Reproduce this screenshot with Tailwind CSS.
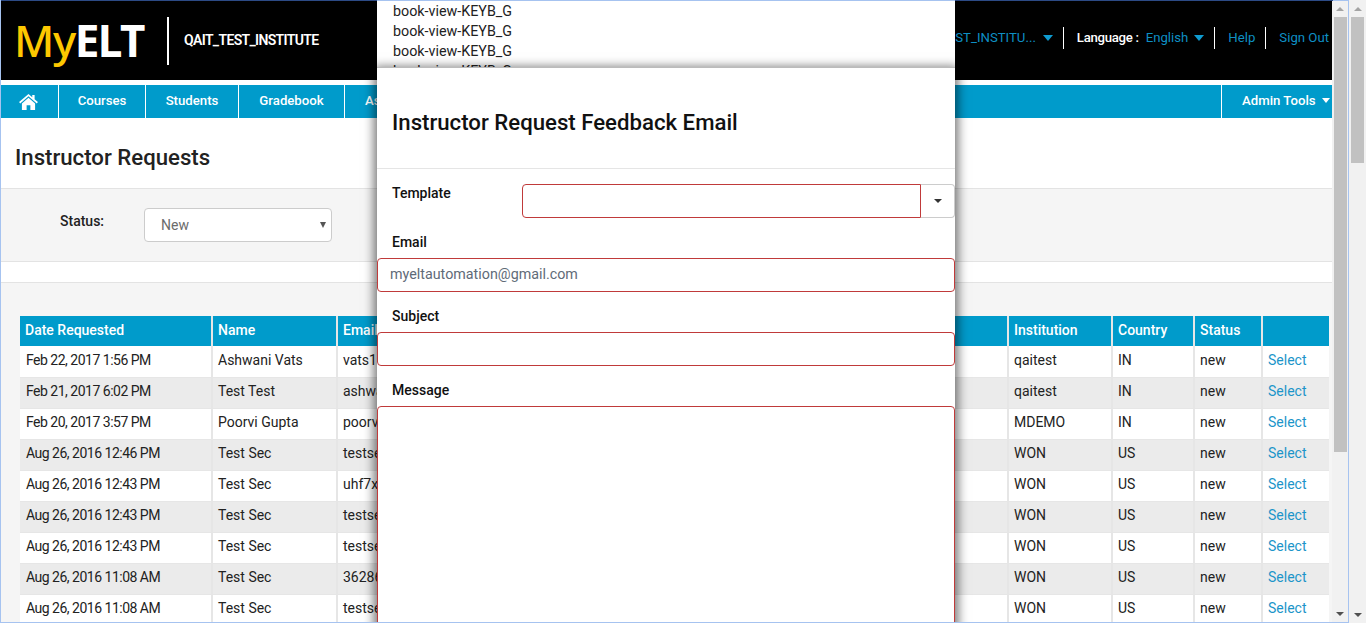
<!DOCTYPE html>
<html lang="en">
  <head>
    <meta charset="UTF-8" />
    <title>Instructor Requests - MyELT</title>
    <script src="https://cdn.jsdelivr.net/npm/@tailwindcss/browser@4"></script>
  </head>
  <body class="h-[623px] w-[1366px] overflow-hidden bg-white font-['Roboto',sans-serif] text-[14px] text-[#222]">
    <div class="flex h-[623px]">
      <!-- framed page -->
      <div class="relative flex h-[623px] w-[1349px] flex-col overflow-hidden border border-t-0 border-[#a6c3f0]">
        <div class="flex h-px shrink-0"><div class="w-[1332px] bg-[#2c4a85]"></div><div class="flex-1 bg-[#a6c3f0]"></div></div>
        <div class="flex min-h-0 flex-1">
          <div class="w-[1331px] overflow-hidden">
            <!-- header -->
            <header class="flex h-[79px] items-center bg-black text-white">
              <div class="ml-[13px] flex w-[135px] items-baseline pb-[2px] font-['Noto_Sans',sans-serif] text-[44px] leading-none tracking-[-1.5px]">
                <span class="font-medium text-[#fdc800]">My</span><span class="font-bold">ELT</span>
              </div>
              <div class="ml-[18px] h-[48px] w-[2px] bg-white"></div>
              <div class="ml-[15px] text-[14px] font-semibold tracking-[-0.65px]">QAIT_TEST_INSTITUTE</div>
              <div class="ml-auto flex items-center pb-[5px] text-[13.200px] text-[#0e8fc4]">
                <span class="pr-[7px]">EST_INSTITU...</span>
                <span class="h-0 w-0 border-x-[5.5px] border-t-[6px] border-x-transparent border-t-[#0e9bd0]"></span>
                <span class="mx-[10px] h-[22px] w-px bg-white"></span>
                <span class="ml-[3px] pr-[7px] font-medium tracking-[-0.3px] text-white">Language :</span>
                <span class="pr-[6px]">English</span>
                <span class="h-0 w-0 border-x-[5.5px] border-t-[6px] border-x-transparent border-t-[#0e9bd0]"></span>
                <span class="mx-[10px] h-[22px] w-px bg-white"></span>
                <span class="ml-[3px]">Help</span>
                <span class="mx-[10px] h-[22px] w-px bg-white"></span>
                <span class="ml-[3px] pr-[3px]">Sign Out</span>
              </div>
            </header>
            <!-- nav -->
            <nav class="mt-[5px] flex h-[33px] bg-[#009bcb] text-[13.200px] font-medium text-white">
              <a class="flex w-[58px] items-center justify-center border-r border-white">
                <svg class="mr-[2px] h-[16px] w-[19px]" viewBox="0 0 20 17" fill="#fff"><path d="M10 0 0 8.6l1.2 1.400L10 2.500l8.800 7.500L20 8.600 16.500 5.600V1h-2.500v2.500z"/><path d="M10 4 3 10v7h5v-5h4v5h5v-7z"/></svg>
              </a>
              <a class="flex w-[87px] items-center justify-center border-r border-white pb-[2px]">Courses</a>
              <a class="flex w-[93px] items-center justify-center border-r border-white pb-[2px]">Students</a>
              <a class="flex w-[106px] items-center justify-center border-r border-white pb-[2px]">Gradebook</a>
              <a class="flex items-center pb-[2px] pl-[20px]">Assignments</a>
              <a class="ml-auto flex w-[111px] items-center gap-[6px] border-l border-white pb-[2px] pl-[20px] whitespace-nowrap">Admin Tools <span class="h-0 w-0 border-x-[4.5px] border-t-[5px] border-x-transparent border-t-white"></span></a>
            </nav>
            <!-- title -->
            <h1 class="h-[70px] pt-[24px] pl-[14px] text-[22.200px] leading-[30px] font-medium text-[#222]">Instructor Requests</h1>
            <!-- filter -->
            <section class="flex h-[74px] border-y border-[#e3e3e3] bg-[#f5f5f5] pt-[19px] pl-[59px]">
              <span class="w-[84px] leading-[26px] font-medium">Status:</span>
              <div class="flex h-[34px] w-[188px] items-center justify-between rounded-[4px] border border-[#ccc] bg-white pr-[5px] pl-[16px] text-[#6b6b6b]">
                <span>New</span>
                <span class="h-0 w-0 border-x-[3.5px] border-t-[6px] border-x-transparent border-t-[#555]"></span>
              </div>
            </section>
            <!-- table -->
            <section class="mt-[20px] h-[400px] border-t border-[#e3e3e3] bg-[#f5f5f5] pt-[33px] pl-[19px]">
              <table class="w-[1309px] table-fixed border-collapse">
                <colgroup>
                  <col class="w-[192px]" /><col class="w-[125px]" /><col class="w-[671px]" /><col class="w-[104px]" /><col class="w-[82px]" /><col class="w-[68px]" /><col class="w-[67px]" />
                </colgroup>
                <thead>
                  <tr class="h-[30px] bg-[#009bcb] text-left font-medium text-white">
                    <th class="border-r-2 border-[#e6e6e6] pb-[2px] pl-[5px] font-medium">Date Requested</th>
                    <th class="border-r-2 border-[#e6e6e6] pb-[2px] pl-[5px] font-medium">Name</th>
                    <th class="border-r-2 border-[#e6e6e6] pb-[2px] pl-[5px] font-medium">Email</th>
                    <th class="border-r-2 border-[#e6e6e6] pb-[2px] pl-[5px] font-medium">Institution</th>
                    <th class="border-r-2 border-[#e6e6e6] pb-[2px] pl-[5px] font-medium">Country</th>
                    <th class="border-r-2 border-[#e6e6e6] pb-[2px] pl-[5px] font-medium">Status</th>
                    <th class="font-medium"></th>
                  </tr>
                </thead>
                <tbody>
                  <tr class="h-[31px] border-b border-[#e6e6e6] bg-white">
                    <td class="border-r-2 border-[#e6e6e6] pb-[2px] pl-[6px] tracking-[-0.5px]">Feb 22, 2017 1:56 PM</td><td class="border-r-2 border-[#e6e6e6] pb-[2px] pl-[5px]">Ashwani Vats</td><td class="border-r-2 border-[#e6e6e6] pb-[2px] pl-[5px]">vats17@gmail.com</td><td class="border-r-2 border-[#e6e6e6] pb-[2px] pl-[5px]">qaitest</td><td class="border-r-2 border-[#e6e6e6] pb-[2px] pl-[5px]">IN</td><td class="border-r-2 border-[#e6e6e6] pb-[2px] pl-[5px]">new</td><td class="pb-[2px] pl-[5px] text-[#1b95c9]">Select</td>
                  </tr>
                  <tr class="h-[31px] border-b border-[#e6e6e6] bg-[#ebebeb]">
                    <td class="border-r-2 border-[#e6e6e6] pb-[2px] pl-[6px] tracking-[-0.5px]">Feb 21, 2017 6:02 PM</td><td class="border-r-2 border-[#e6e6e6] pb-[2px] pl-[5px]">Test Test</td><td class="border-r-2 border-[#e6e6e6] pb-[2px] pl-[5px]">ashwani@gmail.com</td><td class="border-r-2 border-[#e6e6e6] pb-[2px] pl-[5px]">qaitest</td><td class="border-r-2 border-[#e6e6e6] pb-[2px] pl-[5px]">IN</td><td class="border-r-2 border-[#e6e6e6] pb-[2px] pl-[5px]">new</td><td class="pb-[2px] pl-[5px] text-[#1b95c9]">Select</td>
                  </tr>
                  <tr class="h-[31px] border-b border-[#e6e6e6] bg-white">
                    <td class="border-r-2 border-[#e6e6e6] pb-[2px] pl-[6px] tracking-[-0.5px]">Feb 20, 2017 3:57 PM</td><td class="border-r-2 border-[#e6e6e6] pb-[2px] pl-[5px]">Poorvi Gupta</td><td class="border-r-2 border-[#e6e6e6] pb-[2px] pl-[5px]">poorvi@gmail.com</td><td class="border-r-2 border-[#e6e6e6] pb-[2px] pl-[5px]">MDEMO</td><td class="border-r-2 border-[#e6e6e6] pb-[2px] pl-[5px]">IN</td><td class="border-r-2 border-[#e6e6e6] pb-[2px] pl-[5px]">new</td><td class="pb-[2px] pl-[5px] text-[#1b95c9]">Select</td>
                  </tr>
                  <tr class="h-[31px] border-b border-[#e6e6e6] bg-[#ebebeb]">
                    <td class="border-r-2 border-[#e6e6e6] pb-[2px] pl-[6px] tracking-[-0.5px]">Aug 26, 2016 12:46 PM</td><td class="border-r-2 border-[#e6e6e6] pb-[2px] pl-[5px]">Test Sec</td><td class="border-r-2 border-[#e6e6e6] pb-[2px] pl-[5px]">testsec1@gmail.com</td><td class="border-r-2 border-[#e6e6e6] pb-[2px] pl-[5px]">WON</td><td class="border-r-2 border-[#e6e6e6] pb-[2px] pl-[5px]">US</td><td class="border-r-2 border-[#e6e6e6] pb-[2px] pl-[5px]">new</td><td class="pb-[2px] pl-[5px] text-[#1b95c9]">Select</td>
                  </tr>
                  <tr class="h-[31px] border-b border-[#e6e6e6] bg-white">
                    <td class="border-r-2 border-[#e6e6e6] pb-[2px] pl-[6px] tracking-[-0.5px]">Aug 26, 2016 12:43 PM</td><td class="border-r-2 border-[#e6e6e6] pb-[2px] pl-[5px]">Test Sec</td><td class="border-r-2 border-[#e6e6e6] pb-[2px] pl-[5px]">uhf7x@gmail.com</td><td class="border-r-2 border-[#e6e6e6] pb-[2px] pl-[5px]">WON</td><td class="border-r-2 border-[#e6e6e6] pb-[2px] pl-[5px]">US</td><td class="border-r-2 border-[#e6e6e6] pb-[2px] pl-[5px]">new</td><td class="pb-[2px] pl-[5px] text-[#1b95c9]">Select</td>
                  </tr>
                  <tr class="h-[31px] border-b border-[#e6e6e6] bg-[#ebebeb]">
                    <td class="border-r-2 border-[#e6e6e6] pb-[2px] pl-[6px] tracking-[-0.5px]">Aug 26, 2016 12:43 PM</td><td class="border-r-2 border-[#e6e6e6] pb-[2px] pl-[5px]">Test Sec</td><td class="border-r-2 border-[#e6e6e6] pb-[2px] pl-[5px]">testsec2@gmail.com</td><td class="border-r-2 border-[#e6e6e6] pb-[2px] pl-[5px]">WON</td><td class="border-r-2 border-[#e6e6e6] pb-[2px] pl-[5px]">US</td><td class="border-r-2 border-[#e6e6e6] pb-[2px] pl-[5px]">new</td><td class="pb-[2px] pl-[5px] text-[#1b95c9]">Select</td>
                  </tr>
                  <tr class="h-[31px] border-b border-[#e6e6e6] bg-white">
                    <td class="border-r-2 border-[#e6e6e6] pb-[2px] pl-[6px] tracking-[-0.5px]">Aug 26, 2016 12:43 PM</td><td class="border-r-2 border-[#e6e6e6] pb-[2px] pl-[5px]">Test Sec</td><td class="border-r-2 border-[#e6e6e6] pb-[2px] pl-[5px]">testsec3@gmail.com</td><td class="border-r-2 border-[#e6e6e6] pb-[2px] pl-[5px]">WON</td><td class="border-r-2 border-[#e6e6e6] pb-[2px] pl-[5px]">US</td><td class="border-r-2 border-[#e6e6e6] pb-[2px] pl-[5px]">new</td><td class="pb-[2px] pl-[5px] text-[#1b95c9]">Select</td>
                  </tr>
                  <tr class="h-[31px] border-b border-[#e6e6e6] bg-[#ebebeb]">
                    <td class="border-r-2 border-[#e6e6e6] pb-[2px] pl-[6px] tracking-[-0.5px]">Aug 26, 2016 11:08 AM</td><td class="border-r-2 border-[#e6e6e6] pb-[2px] pl-[5px]">Test Sec</td><td class="border-r-2 border-[#e6e6e6] pb-[2px] pl-[5px]">36286@gmail.com</td><td class="border-r-2 border-[#e6e6e6] pb-[2px] pl-[5px]">WON</td><td class="border-r-2 border-[#e6e6e6] pb-[2px] pl-[5px]">US</td><td class="border-r-2 border-[#e6e6e6] pb-[2px] pl-[5px]">new</td><td class="pb-[2px] pl-[5px] text-[#1b95c9]">Select</td>
                  </tr>
                  <tr class="h-[31px] border-b border-[#e6e6e6] bg-white">
                    <td class="border-r-2 border-[#e6e6e6] pb-[2px] pl-[6px] tracking-[-0.5px]">Aug 26, 2016 11:08 AM</td><td class="border-r-2 border-[#e6e6e6] pb-[2px] pl-[5px]">Test Sec</td><td class="border-r-2 border-[#e6e6e6] pb-[2px] pl-[5px]">testsec4@gmail.com</td><td class="border-r-2 border-[#e6e6e6] pb-[2px] pl-[5px]">WON</td><td class="border-r-2 border-[#e6e6e6] pb-[2px] pl-[5px]">US</td><td class="border-r-2 border-[#e6e6e6] pb-[2px] pl-[5px]">new</td><td class="pb-[2px] pl-[5px] text-[#1b95c9]">Select</td>
                  </tr>
                </tbody>
              </table>
            </section>
          </div>
          <!-- inner scrollbar -->
          <div class="flex w-[16px] flex-col bg-[#f1f1f1]">
            <div class="flex h-[16px] items-center justify-center"><span class="h-0 w-0 border-x-[4px] border-b-[4px] border-x-transparent border-b-[#a3a3a3]"></span></div>
            <div class="h-[435px] w-[13px] self-center bg-[#c1c1c1]"></div>
            <div class="mt-auto flex h-[16px] items-center justify-center"><span class="h-0 w-0 border-x-[4px] border-t-[4px] border-x-transparent border-t-[#505050]"></span></div>
          </div>
        </div>
        <!-- modal, sits over the page -->
        <div class="absolute top-0 left-[376px] h-[68px] w-[578px] overflow-hidden border-t border-[#a6c3f0] bg-white pl-[16px] text-[14.300px] leading-[20px] text-[#222]">
          <p>book-view-KEYB_G</p>
          <p>book-view-KEYB_G</p>
          <p>book-view-KEYB_G</p>
          <p>book-view-KEYB_G</p>
        </div>
        <div class="absolute top-[67px] left-[376px] h-[560px] w-[578px] border-t border-[#bbb] bg-white shadow-[0_3px_10px_3px_rgba(0,0,0,0.55)]">
          <div class="flex h-[101px] items-center border-b border-[#e5e5e5] pt-[9px] pl-[15px] text-[22.200px] font-medium text-[#111]">Instructor Request Feedback Email</div>
          <div class="mt-[15px] flex h-[34px]">
            <label class="-mt-px w-[145px] pl-[15px] font-medium text-[#111]">Template</label>
            <div class="h-[34px] w-[399px] rounded-l-[4px] border border-[#c03a3a]"></div>
            <div class="flex h-[34px] w-[34px] items-center justify-center rounded-r-[4px] border border-l-0 border-[#ccc]"><span class="h-0 w-0 border-x-[4px] border-t-[4px] border-x-transparent border-t-[#333]"></span></div>
          </div>
          <label class="mt-[14px] block h-[26px] pl-[15px] font-medium text-[#111]">Email</label>
          <div class="flex h-[34px] items-center rounded-[4px] border border-[#c03a3a] pl-[12px] text-[14.300px] text-[#5f6b78]">myeltautomation@gmail.com</div>
          <label class="mt-[14px] block h-[26px] pl-[15px] font-medium text-[#111]">Subject</label>
          <div class="h-[34px] rounded-[4px] border border-[#c03a3a]"></div>
          <label class="mt-[14px] block h-[26px] pl-[15px] font-medium text-[#111]">Message</label>
          <div class="h-[260px] rounded-[4px] border border-[#c03a3a]"></div>
        </div>
      </div>
      <!-- outer scrollbar -->
      <div class="flex w-[17px] flex-col bg-[#f1f1f1]">
        <div class="flex h-[17px] items-center justify-center"><span class="h-0 w-0 border-x-[4px] border-b-[4px] border-x-transparent border-b-[#a3a3a3]"></span></div>
        <div class="h-[146px] w-[13px] self-center bg-[#c1c1c1]"></div>
        <div class="mt-auto flex h-[17px] items-center justify-center"><span class="h-0 w-0 border-x-[4px] border-t-[4px] border-x-transparent border-t-[#505050]"></span></div>
      </div>
    </div>
  </body>
</html>
